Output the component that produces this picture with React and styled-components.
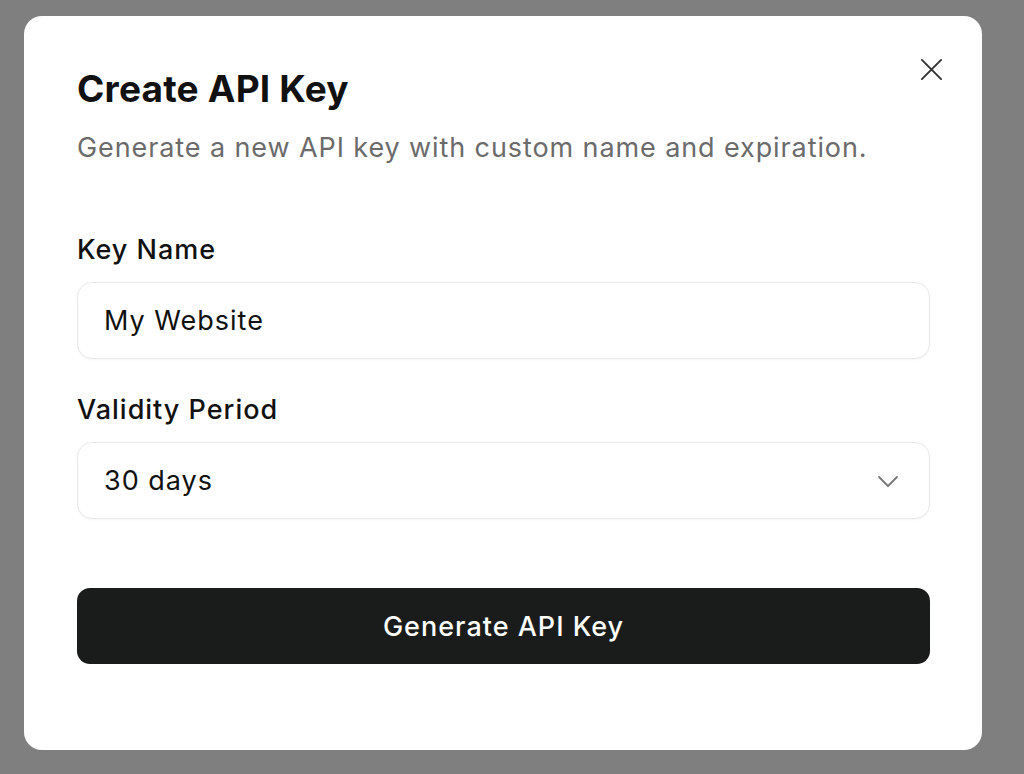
import React, { useState } from 'react';
import styled, { createGlobalStyle } from 'styled-components';

const GlobalStyle = createGlobalStyle`
  html, body {
    margin: 0;
    padding: 0;
    background: #7f7f7f;
    font-family: Inter, "Noto Sans", sans-serif;
  }
`;

const Backdrop = styled.div`
  width: 1024px;
  height: 774px;
  padding: 16px 42px 24px 24px;
  box-sizing: border-box;
`;

const Dialog = styled.div`
  position: relative;
  width: 958px;
  height: 734px;
  box-sizing: border-box;
  background: #ffffff;
  border-radius: 18px;
  padding: 52px 52px 0 53px;
  display: flex;
  flex-direction: column;
`;

const Close = styled.button`
  position: absolute;
  top: 37px;
  right: 35px;
  width: 32px;
  height: 32px;
  padding: 0;
  border: none;
  background: none;
  display: flex;
  align-items: center;
  justify-content: center;
  color: #333;
  cursor: pointer;
`;

const Title = styled.h2`
  margin: 0;
  font-size: 37px;
  font-weight: 700;
  letter-spacing: 0.2px;
  color: #111;
  line-height: 42px;
`;

const Subtitle = styled.p`
  margin: 20px 0 0;
  font-size: 27px;
  letter-spacing: 0.9px;
  color: #6b6b6b;
  line-height: 36px;
`;

const Field = styled.div`
  display: flex;
  flex-direction: column;
  margin-top: ${p => p.top}px;
`;

const Label = styled.label`
  font-size: 27px;
  font-weight: 500;
  letter-spacing: 1px;
  color: #111;
  line-height: 32px;
`;

const Input = styled.input`
  margin-top: 16px;
  height: 77px;
  box-sizing: border-box;
  border: 1.5px solid #e8e8e8;
  border-radius: 15px;
  padding: 0 26px;
  font-family: inherit;
  font-size: 27px;
  letter-spacing: 1px;
  color: #111;
  outline: none;
  box-shadow: 0 1px 2px rgba(0, 0, 0, 0.04);
`;

const Select = styled.button`
  margin-top: 16px;
  height: 77px;
  box-sizing: border-box;
  border: 1.5px solid #e8e8e8;
  border-radius: 15px;
  padding: 0 30px 0 26px;
  background: #fff;
  font-family: inherit;
  font-size: 27px;
  letter-spacing: 1px;
  color: #111;
  display: flex;
  align-items: center;
  justify-content: space-between;
  box-shadow: 0 1px 2px rgba(0, 0, 0, 0.04);
  cursor: pointer;
`;

const Submit = styled.button`
  margin-top: 69px;
  height: 76px;
  border: none;
  border-radius: 13px;
  background: #1a1b1b;
  color: #fff;
  font-family: inherit;
  font-size: 27px;
  font-weight: 500;
  letter-spacing: 1px;
  cursor: pointer;
`;

const App = () => {
  const [name, setName] = useState('My Website');
  return (
    <>
      <GlobalStyle />
      <Backdrop>
        <Dialog>
          <Close aria-label="Close">
            <svg width="23" height="23" viewBox="0 0 24 24" fill="none" stroke="currentColor" strokeWidth="2" strokeLinecap="round">
              <path d="M2 2L22 22M22 2L2 22" />
            </svg>
          </Close>
          <Title>Create API Key</Title>
          <Subtitle>Generate a new API key with custom name and expiration.</Subtitle>
          <Field top={68}>
            <Label>Key Name</Label>
            <Input value={name} onChange={e => setName(e.target.value)} />
          </Field>
          <Field top={35}>
            <Label>Validity Period</Label>
            <Select>
              <span>30 days</span>
              <svg width="22" height="14" viewBox="0 0 22 14" fill="none" stroke="#777" strokeWidth="1.8" strokeLinecap="round" strokeLinejoin="round">
                <path d="M2 3L11 12L20 3" />
              </svg>
            </Select>
          </Field>
          <Submit>Generate API Key</Submit>
        </Dialog>
      </Backdrop>
    </>
  );
};

export default App;
